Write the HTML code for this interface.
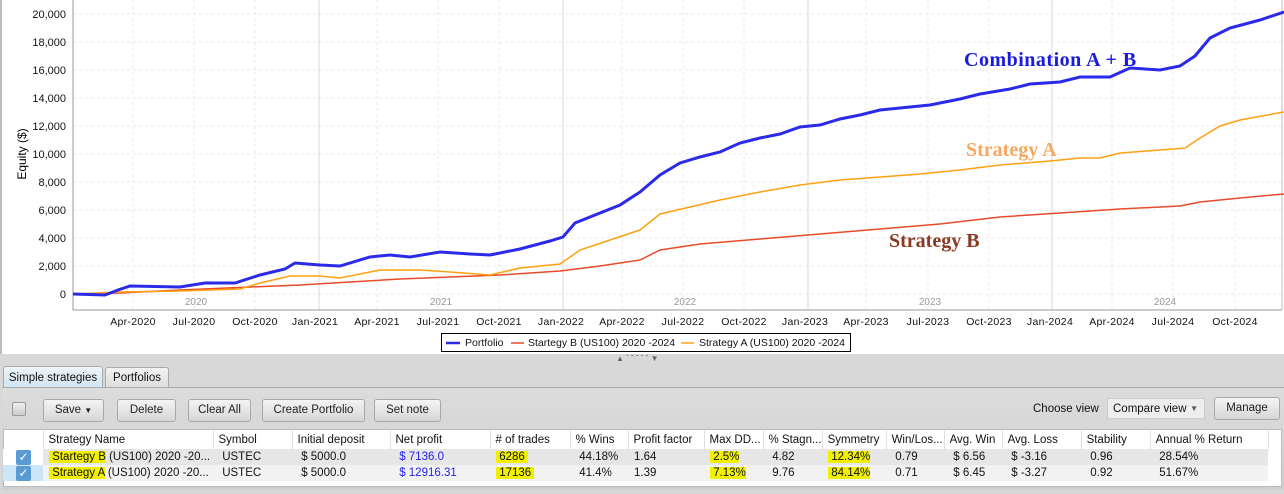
<!DOCTYPE html>
<html><head><meta charset="utf-8"><style>
*{margin:0;padding:0;box-sizing:border-box}
body{width:1284px;height:494px;overflow:hidden;background:#d8d8d8;font-family:"Liberation Sans",sans-serif;font-size:11px;color:#111;position:relative}
.abs{position:absolute}
.btn{position:absolute;top:399px;height:23px;border:1px solid #a8a8a8;border-radius:3px;background:linear-gradient(#f4f4f4,#d6d6d6);font-size:11.5px;text-align:center;line-height:21px;color:#222}
.hl{background:#f0f000}
table{border-collapse:collapse;position:absolute;left:3px;top:430px;font-size:11.5px}
td{height:16px;padding:0 0 0 6px;white-space:nowrap;overflow:hidden}
.h td{height:19px;border-right:1px solid #e0e0e0;padding-left:5px}
</style></head><body>
<div class="abs" style="left:0;top:0;width:1284px;height:354px;background:#fff;border-left:2px solid #bbb"></div>
<svg class="abs" style="left:0;top:0" width="1284" height="354" font-family="Liberation Sans,sans-serif">
<g stroke="#e8e8e8" stroke-dasharray="3,3">
<line x1="73" x2="1282" y1="14" y2="14"/><line x1="73" x2="1282" y1="42" y2="42"/><line x1="73" x2="1282" y1="70" y2="70"/><line x1="73" x2="1282" y1="98" y2="98"/><line x1="73" x2="1282" y1="126" y2="126"/><line x1="73" x2="1282" y1="154" y2="154"/><line x1="73" x2="1282" y1="182" y2="182"/><line x1="73" x2="1282" y1="210" y2="210"/><line x1="73" x2="1282" y1="238" y2="238"/><line x1="73" x2="1282" y1="266" y2="266"/><line x1="73" x2="1282" y1="294" y2="294"/>
<line x1="133" x2="133" y1="0" y2="310"/><line x1="194" x2="194" y1="0" y2="310"/><line x1="255" x2="255" y1="0" y2="310"/><line x1="377" x2="377" y1="0" y2="310"/><line x1="438" x2="438" y1="0" y2="310"/><line x1="499" x2="499" y1="0" y2="310"/><line x1="622" x2="622" y1="0" y2="310"/><line x1="683" x2="683" y1="0" y2="310"/><line x1="744" x2="744" y1="0" y2="310"/><line x1="866" x2="866" y1="0" y2="310"/><line x1="928" x2="928" y1="0" y2="310"/><line x1="989" x2="989" y1="0" y2="310"/><line x1="1112" x2="1112" y1="0" y2="310"/><line x1="1173" x2="1173" y1="0" y2="310"/><line x1="1235" x2="1235" y1="0" y2="310"/>
</g>
<g stroke="#d8d8d8"><line x1="319" x2="319" y1="0" y2="310"/><line x1="563" x2="563" y1="0" y2="310"/><line x1="808" x2="808" y1="0" y2="310"/><line x1="1052" x2="1052" y1="0" y2="310"/></g>
<line x1="73" x2="73" y1="0" y2="310" stroke="#999"/><line x1="73" x2="1282" y1="310" y2="310" stroke="#999"/><line x1="1282" x2="1282" y1="0" y2="310" stroke="#bbb"/>
<g font-size="11" text-anchor="end" fill="#111">
<text x="66" y="18">20,000</text><text x="66" y="46">18,000</text><text x="66" y="74">16,000</text><text x="66" y="102">14,000</text><text x="66" y="130">12,000</text><text x="66" y="158">10,000</text><text x="66" y="186">8,000</text><text x="66" y="214">6,000</text><text x="66" y="242">4,000</text><text x="66" y="270">2,000</text><text x="66" y="298">0</text></g>
<text transform="translate(26,154) rotate(-90)" font-size="12" text-anchor="middle">Equity ($)</text>
<g font-size="10" fill="#999" text-anchor="middle"><text x="196" y="305">2020</text><text x="441" y="305">2021</text><text x="685" y="305">2022</text><text x="930" y="305">2023</text><text x="1165" y="305">2024</text></g>
<g font-size="10.5" text-anchor="middle" fill="#111" letter-spacing="0.3">
<text x="133" y="325">Apr-2020</text><text x="194" y="325">Jul-2020</text><text x="255" y="325">Oct-2020</text><text x="315" y="325">Jan-2021</text><text x="377" y="325">Apr-2021</text><text x="438" y="325">Jul-2021</text><text x="499" y="325">Oct-2021</text><text x="561" y="325">Jan-2022</text><text x="622" y="325">Apr-2022</text><text x="683" y="325">Jul-2022</text><text x="744" y="325">Oct-2022</text><text x="805" y="325">Jan-2023</text><text x="866" y="325">Apr-2023</text><text x="928" y="325">Jul-2023</text><text x="989" y="325">Oct-2023</text><text x="1050" y="325">Jan-2024</text><text x="1112" y="325">Apr-2024</text><text x="1173" y="325">Jul-2024</text><text x="1235" y="325">Oct-2024</text></g>
<polyline fill="none" stroke="#e84a2a" stroke-width="1.5" points="73,294 120,293 180,290 250,287 300,285 350,282 400,279 450,277 500,275 560,271 600,266 640,260 660,250 700,244 760,239 820,234 880,229 940,224 1000,217 1060,213 1120,209 1180,206 1200,202 1240,198 1284,194"/>
<polyline fill="none" stroke="#ffa010" stroke-width="1.5" points="73,294 120,292 180,291 240,289 260,283 290,276 320,276 340,278 380,270 420,270 450,272 490,275 520,268 560,264 580,250 610,240 640,230 660,214 690,207 720,200 760,192 800,185 840,180 880,177 920,174 960,170 1000,165 1050,161 1080,158 1100,158 1120,153 1160,150 1185,148 1200,138 1220,126 1240,120 1284,112"/>
<polyline fill="none" stroke="#2a2ae8" stroke-width="3" points="73,294 105,295 118,290 130,286 180,287 205,283 235,283 260,275 285,269 295,263 320,265 340,266 370,257 390,255 410,257 440,252 470,254 490,255 520,249 550,241 563,237 575,223 600,213 620,205 640,192 660,175 680,163 700,157 720,152 740,143 760,138 780,134 800,127 820,125 840,119 860,115 880,110 900,108 930,105 960,99 980,94 1010,89 1030,84 1060,82 1080,77 1110,77 1130,68 1160,70 1180,66 1195,56 1210,38 1230,28 1260,20 1284,12"/>
<g font-family="Liberation Serif,serif" font-weight="bold" font-size="20"><text x="964" y="66" fill="#1a1ae0" letter-spacing="0.5">Combination  A + B</text><text x="966" y="156" fill="#f6a860">Strategy A</text><text x="889" y="247" fill="#8a3a22">Strategy B</text></g>
<rect x="441.5" y="333.5" width="409" height="18" fill="#fff" stroke="#000"/>
<g font-size="10.5" fill="#111"><line x1="446" x2="460" y1="343" y2="343" stroke="#2a2ae8" stroke-width="2.5"/><text x="465" y="346">Portfolio</text>
<line x1="511" x2="524" y1="343" y2="343" stroke="#e84a2a" stroke-width="1.5"/><text x="528" y="346">Startegy B (US100) 2020 -2024</text>
<line x1="681" x2="694" y1="343" y2="343" stroke="#ffa010" stroke-width="1.5"/><text x="699" y="346">Strategy A (US100) 2020 -2024</text></g>
</svg>
<div class="abs" style="left:616px;top:354px;font-size:8px;color:#666">▲ ˇ ˇ ˇ ˇ ˇ ▼</div>
<div class="abs" style="left:3px;top:366px;width:100px;height:22px;border:1px solid #aaa;border-bottom:none;border-radius:3px 3px 0 0;background:linear-gradient(#f0f4f8,#cfe4f2);font-size:11.5px;line-height:22px;text-align:center">Simple strategies</div>
<div class="abs" style="left:105px;top:367px;width:64px;height:21px;border:1px solid #aaa;border-bottom:none;border-radius:3px 3px 0 0;background:linear-gradient(#f2f2f2,#dcdcdc);font-size:11.5px;line-height:21px;text-align:center">Portfolios</div>
<div class="abs" style="left:2px;top:387px;width:1282px;height:103px;border-top:1px solid #aaa;background:linear-gradient(#dcdcdc,#cfcfcf)"></div>
<div class="abs" style="left:12px;top:402px;width:14px;height:14px;border:1px solid #999;border-radius:2px;background:linear-gradient(#eee,#ccc)"></div>
<div class="btn" style="left:43px;width:61px">Save <span style="font-size:8px">▼</span></div>
<div class="btn" style="left:117px;width:59px">Delete</div>
<div class="btn" style="left:188px;width:63px">Clear All</div>
<div class="btn" style="left:262px;width:103px">Create Portfolio</div>
<div class="btn" style="left:374px;width:67px">Set note</div>
<div class="abs" style="left:1033px;top:403px;font-size:11.5px">Choose view</div>
<div class="abs" style="left:1107px;top:398px;width:98px;height:21px;border:1px solid #ccc;background:#eee;font-size:11.5px;line-height:20px;padding-left:5px">Compare view <span style="position:absolute;right:6px;font-size:8px;color:#555">▼</span></div>
<div class="btn" style="left:1214px;top:397px;width:66px">Manage</div>
<div class="abs" style="left:3px;top:429px;width:1279px;height:58px;background:#fff;border:1px solid #bbb"></div>
<table>
<tr class="h"><td style="width:40px"></td><td style="width:170px">Strategy Name</td><td style="width:79px">Symbol</td><td style="width:98px">Initial deposit</td><td style="width:100px">Net profit</td><td style="width:80px"># of trades</td><td style="width:58px">% Wins</td><td style="width:76px">Profit factor</td><td style="width:59px">Max DD...</td><td style="width:59px">% Stagn...</td><td style="width:64px">Symmetry</td><td style="width:58px">Win/Los...</td><td style="width:58px">Avg. Win</td><td style="width:79px">Avg. Loss</td><td style="width:69px">Stability</td><td style="width:118px">Annual % Return</td></tr>
<tr style="background:#e6e6e6"><td style="background:#fff;padding-left:13px"><span style="display:inline-block;width:15px;height:15px;border-radius:2px;background:#5b9bd5;color:#fff;font-size:12px;line-height:15px;text-align:center">✓</span></td><td><span class="hl">&nbsp;Startegy B</span> (US100) 2020 -20...</td><td>&nbsp;USTEC</td><td>&nbsp;$ 5000.0</td><td style="color:#2222ee">&nbsp;$ 7136.0</td><td><span class="hl">&nbsp;6286&nbsp;</span></td><td>&nbsp;44.18%</td><td>1.64</td><td><span class="hl">&nbsp;2.5%</span></td><td>&nbsp;4.82</td><td><span class="hl">&nbsp;12.34%</span></td><td>&nbsp;0.79</td><td>&nbsp;$ 6.56</td><td>&nbsp;$ -3.16</td><td>&nbsp;0.96</td><td>&nbsp;28.54%</td></tr>
<tr style="background:#f2f2f2"><td style="background:#cde6f7;padding-left:13px"><span style="display:inline-block;width:15px;height:15px;border-radius:2px;background:#5b9bd5;color:#fff;font-size:12px;line-height:15px;text-align:center">✓</span></td><td><span class="hl">&nbsp;Strategy A</span> (US100) 2020 -20...</td><td>&nbsp;USTEC</td><td>&nbsp;$ 5000.0</td><td style="color:#2222ee">&nbsp;$ 12916.31</td><td><span class="hl">&nbsp;17136&nbsp;</span></td><td>&nbsp;41.4%</td><td>1.39</td><td><span class="hl">&nbsp;7.13%</span></td><td>&nbsp;9.76</td><td><span class="hl">&nbsp;84.14%</span></td><td>&nbsp;0.71</td><td>&nbsp;$ 6.45</td><td>&nbsp;$ -3.27</td><td>&nbsp;0.92</td><td>&nbsp;51.67%</td></tr>
</table>
</body></html>
